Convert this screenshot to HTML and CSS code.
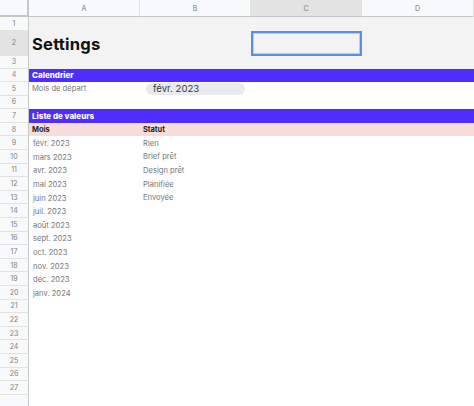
FILE: index.html
```html
<!DOCTYPE html>
<html lang="fr">
<head>
<meta charset="utf-8">
<link rel="stylesheet" href="styles.css">
</head>
<body>
<div class="sheet">
  <div class="row colhead">
    <div class="corner"></div>
    <div class="ch">A</div><div class="ch">B</div><div class="ch sel">C</div><div class="ch">D</div>
  </div>
  <div class="row r1 gray"><div class="rh">1</div><div class="c"></div><div class="c"></div><div class="c"></div><div class="c"></div></div>
  <div class="row r2 gray"><div class="rh sel">2</div><div class="c title">Settings</div><div class="c"></div><div class="c active"></div><div class="c"></div></div>
  <div class="row r3 gray"><div class="rh">3</div><div class="c"></div><div class="c"></div><div class="c"></div><div class="c"></div></div>
  <div class="row band"><div class="rh">4</div><div class="c">Calendrier</div><div class="c"></div><div class="c"></div><div class="c"></div></div>
  <div class="row"><div class="rh">5</div><div class="c">Mois de départ</div><div class="c"><span class="chip">févr. 2023</span></div><div class="c"></div><div class="c"></div></div>
  <div class="row"><div class="rh">6</div><div class="c"></div><div class="c"></div><div class="c"></div><div class="c"></div></div>
  <div class="row band"><div class="rh">7</div><div class="c">Liste de valeurs</div><div class="c"></div><div class="c"></div><div class="c"></div></div>
  <div class="row pink"><div class="rh">8</div><div class="c">Mois</div><div class="c">Statut</div><div class="c"></div><div class="c"></div></div>
  <div class="row"><div class="rh">9</div><div class="c m">févr. 2023</div><div class="c">Rien</div><div class="c"></div><div class="c"></div></div>
  <div class="row"><div class="rh">10</div><div class="c m">mars 2023</div><div class="c">Brief prêt</div><div class="c"></div><div class="c"></div></div>
  <div class="row"><div class="rh">11</div><div class="c m">avr. 2023</div><div class="c">Design prêt</div><div class="c"></div><div class="c"></div></div>
  <div class="row"><div class="rh">12</div><div class="c m">mai 2023</div><div class="c">Planifiée</div><div class="c"></div><div class="c"></div></div>
  <div class="row"><div class="rh">13</div><div class="c m">juin 2023</div><div class="c">Envoyée</div><div class="c"></div><div class="c"></div></div>
  <div class="row"><div class="rh">14</div><div class="c m">juil. 2023</div><div class="c"></div><div class="c"></div><div class="c"></div></div>
  <div class="row"><div class="rh">15</div><div class="c m">août 2023</div><div class="c"></div><div class="c"></div><div class="c"></div></div>
  <div class="row"><div class="rh">16</div><div class="c m">sept. 2023</div><div class="c"></div><div class="c"></div><div class="c"></div></div>
  <div class="row"><div class="rh">17</div><div class="c m">oct. 2023</div><div class="c"></div><div class="c"></div><div class="c"></div></div>
  <div class="row"><div class="rh">18</div><div class="c m">nov. 2023</div><div class="c"></div><div class="c"></div><div class="c"></div></div>
  <div class="row"><div class="rh">19</div><div class="c m">déc. 2023</div><div class="c"></div><div class="c"></div><div class="c"></div></div>
  <div class="row"><div class="rh">20</div><div class="c m">janv. 2024</div><div class="c"></div><div class="c"></div><div class="c"></div></div>
  <div class="row"><div class="rh">21</div><div class="c"></div><div class="c"></div><div class="c"></div><div class="c"></div></div>
  <div class="row"><div class="rh">22</div><div class="c"></div><div class="c"></div><div class="c"></div><div class="c"></div></div>
  <div class="row"><div class="rh">23</div><div class="c"></div><div class="c"></div><div class="c"></div><div class="c"></div></div>
  <div class="row"><div class="rh">24</div><div class="c"></div><div class="c"></div><div class="c"></div><div class="c"></div></div>
  <div class="row"><div class="rh">25</div><div class="c"></div><div class="c"></div><div class="c"></div><div class="c"></div></div>
  <div class="row"><div class="rh">26</div><div class="c"></div><div class="c"></div><div class="c"></div><div class="c"></div></div>
  <div class="row"><div class="rh">27</div><div class="c"></div><div class="c"></div><div class="c"></div><div class="c"></div></div>
  <div class="row"><div class="rh"></div><div class="c"></div><div class="c"></div><div class="c"></div><div class="c"></div></div>
</div>
</body>
</html>
```
FILE: styles.css
```css
html, body {
  margin: 0;
  padding: 0;
  background: #ffffff;
}
body {
  width: 474px;
  height: 406px;
  overflow: hidden;
  font-family: Inter, "Open Sans", "Liberation Sans", sans-serif;
}
.sheet {
  display: flex;
  flex-direction: column;
}
.row {
  display: grid;
  grid-template-columns: 29px 111px 111px 111px 112px;
  height: 13.6px;
  flex: none;
}
.row > div {
  box-sizing: border-box;
  overflow: hidden;
  white-space: nowrap;
}
.colhead {
  height: 17px;
}
.corner {
  background: #f8f9fa;
  border-right: 2px solid #c4c7c5;
  border-bottom: 2px solid #c4c7c5;
}
.ch {
  background: #f8f9fa;
  border-right: 1px solid #e1e3e1;
  border-bottom: 1px solid #c4c7c5;
  color: #777;
  font-size: 7px;
  display: flex;
  align-items: center;
  justify-content: center;
}
.ch.sel {
  background: #e3e3e3;
}
.rh {
  background: #f8f9fa;
  border-right: 1px solid #c4c7c5;
  border-bottom: 1px solid #e1e3e1;
  color: #808080;
  font-size: 7px;
  display: flex;
  align-items: center;
  justify-content: center;
}
.rh.sel {
  background: #e3e3e3;
}
.c {
  padding-left: 3px;
  display: flex;
  align-items: center;
  font-size: 7.6px;
  color: #767676;
}
.c.m {
  padding-left: 4px;
  padding-top: 1px;
}
.r1 { height: 14px; }
.r2 { height: 24.5px; }
.r3 { height: 13px; }
.gray .c {
  background: #f3f3f3;
}
.title {
  font-size: 16.6px;
  font-weight: 700;
  color: #111;
  letter-spacing: 0.2px;
  padding-top: 2px;
}
.active {
  border: 2px solid #5b8fe3;
  box-shadow: inset 0 0 0 1px #b6cdf3;
}
.band .c {
  background: #4e2dff;
  color: #ffffff;
  font-weight: 800;
  font-size: 8px;
}
.pink .c {
  background: #f6dcda;
  color: #222;
  font-weight: 700;
  font-size: 7.4px;
}
.chip {
  margin-left: 3px;
  width: 99px;
  height: 12px;
  box-sizing: border-box;
  border-radius: 6px;
  background: #e8eaed;
  color: #3c3c3c;
  font-size: 9.6px;
  padding-left: 7px;
  display: flex;
  align-items: center;
}
```
